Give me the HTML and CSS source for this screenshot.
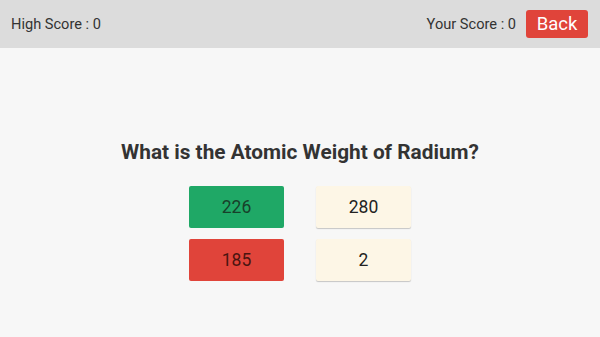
FILE: index.html
```html
<!DOCTYPE html>
<html lang="en">

<head>
    <meta charset="UTF-8">
    <meta name="viewport" content="width=device-width, initial-scale=1.0">
    <title>Quiz</title>
    <link rel="stylesheet" href="styles.css">
</head>

<body>
    <div class="topbar">
        <span class="score">High Score : 0</span>
        <div class="right">
            <span class="score">Your Score : 0</span>
            <button class="back">Back</button>
        </div>
    </div>

    <div class="main">
        <h2 class="question">What is the Atomic Weight of Radium?</h2>
        <div class="answers">
            <button class="answer correct">226</button>
            <button class="answer">280</button>
            <button class="answer wrong">185</button>
            <button class="answer">2</button>
        </div>
    </div>
</body>

</html>
```

FILE: styles.css
```css
body {
    font-family: Roboto, "Liberation Sans", sans-serif;
    background-color: #f7f7f7;
    margin: 0;
    padding: 0;
    height: 337px;
}

.topbar {
    background-color: #dcdcdc;
    height: 48px;
    display: flex;
    justify-content: space-between;
    align-items: center;
    padding: 0 11px;
}

.right {
    display: flex;
    align-items: center;
    gap: 10px;
}

.score {
    font-size: 14.6px;
    color: #333;
}

.back {
    background-color: #e0443a;
    color: #fff;
    border: none;
    border-radius: 3px;
    font-family: inherit;
    font-size: 18.5px;
    width: 62px;
    height: 28px;
    padding: 0;
    margin-right: 1px;
    margin-top: -1px;
}

.main {
    display: flex;
    flex-direction: column;
    align-items: center;
}

.question {
    font-size: 20.8px;
    font-weight: bold;
    color: #333;
    margin: 92px 0 22px 0;
}

.answers {
    display: grid;
    grid-template-columns: 95px 95px;
    column-gap: 32px;
    row-gap: 11px;
}

.answer {
    height: 42px;
    border: none;
    border-radius: 2px;
    font-family: inherit;
    font-size: 17.5px;
    color: #222;
    background-color: #fdf6e6;
    box-shadow: 0 1px 1px rgba(0, 0, 0, 0.2);
    padding: 0;
}

.correct {
    background-color: #1fa866;
    color: #17402a;
    box-shadow: none;
}

.wrong {
    background-color: #e0443a;
    color: #4a1410;
    box-shadow: none;
}
```
